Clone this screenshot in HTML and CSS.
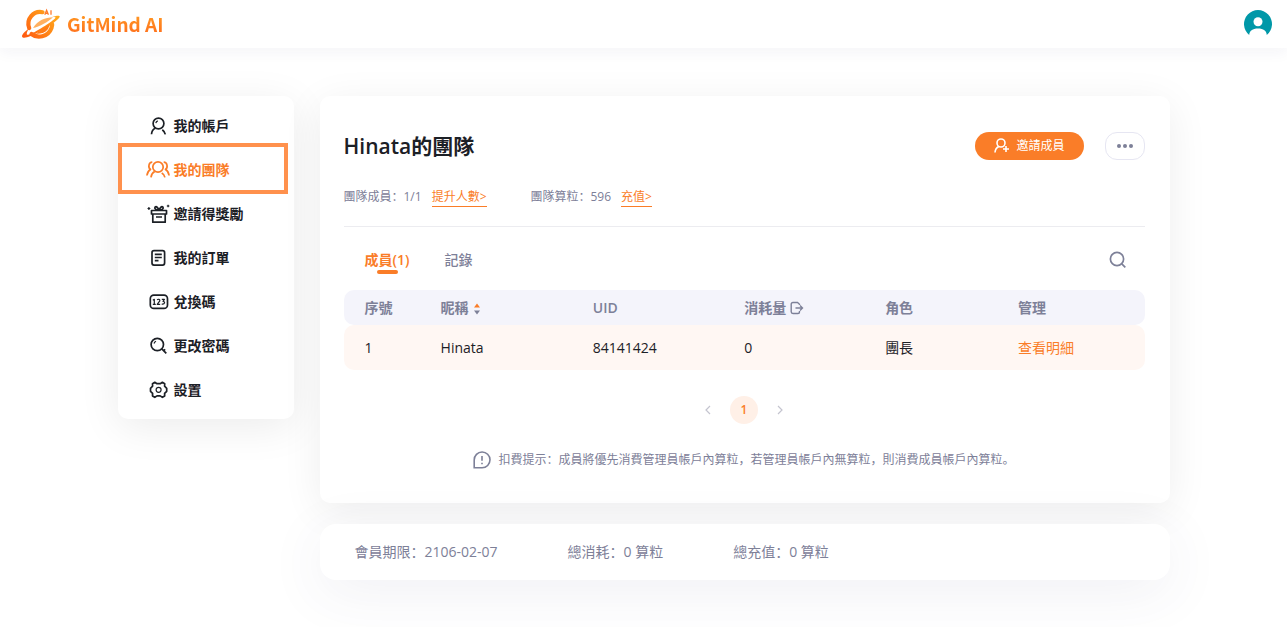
FILE: index.html
```html
<!DOCTYPE html>
<html lang="zh-CN">
<head>
<meta charset="utf-8">
<title>GitMind AI</title>
<link rel="stylesheet" href="styles.css">
</head>
<body>
<header class="topbar">
  <a class="brand" href="#">
    <svg class="brand-mark" viewBox="0 0 40 32" aria-hidden="true">
      <defs><linearGradient id="flame" gradientUnits="userSpaceOnUse" x1="4" y1="30" x2="34" y2="4"><stop offset="0" stop-color="#ff5a10"/><stop offset="1" stop-color="#ffac1c"/></linearGradient></defs>
      <path d="M21.500 4.200A11.800 11.800 0 0 0 8.200 20" fill="none" stroke="url(#flame)" stroke-width="4.200" stroke-linecap="round"/>
      <path d="M10.500 26C16 30.500 27 29.500 30.500 20L31.200 16.500" fill="none" stroke="url(#flame)" stroke-width="4.200" stroke-linecap="round"/>
      <path d="M8 20.500C2.500 24.300-.5 28.500 1.800 29.500 5 30.500 11 27.500 18 24 28 18.700 38 11.500 38.700 8.800 39.200 7 34.500 8 30 9.300 33 8.800 35 8.900 34.300 10 32.500 13 12.500 25.700 7 26.800 5 27.200 5.500 24 8 20.500Z" fill="url(#flame)"/>
      <path d="M12 20C17 12 24 9.500 32 9.200 28 13.300 18 18.800 12 20Z" fill="#ffb060"/>
      <path d="M15 25.500L28.500 16.500C28 23 21.500 26.500 15 25.500Z" fill="#ff7c17"/>
      <path d="M23.800 6.700L25.600 2.300 27.400 6.700M24.500 5.400H26.700M30 2.200V6.700" fill="none" stroke="#ff7a2c" stroke-width="1.300"/>
    </svg>
    <span class="brand-name">GitMind AI</span>
  </a>
  <button class="avatar" aria-label="帳戶">
    <svg viewBox="0 0 28 28" aria-hidden="true"><path d="M5.200 25A14 14 0 1 1 22.800 25C22.500 20.800 19.500 18.600 14 18.600S5.500 20.800 5.200 25Z" fill="#0098a8"/><circle cx="14" cy="11.800" r="4.500" fill="#fff"/></svg>
  </button>
</header>
<div class="layout">
  <nav class="sidebar">
    <a class="nav-item" href="#"><svg class="icon" viewBox="0 0 24 20"><circle cx="12.500" cy="7.500" r="5.400"/><path d="M9.300 12.300C7 13.300 5.700 15.300 5.500 18.300M16.300 13.700C18 15 19 16.500 19.300 18.300"/><path class="thin" d="M9.800 7.200A3 3 0 0 1 11.800 4.900"/></svg>我的帳戶</a>
    <a class="nav-item active" href="#" aria-current="page"><svg class="icon" viewBox="0 0 24 20"><circle cx="12" cy="7" r="5.200"/><path d="M8.700 11.500C6.400 12.600 5.300 14.600 5 17.300M15.700 13C17.600 14 18.600 15.500 18.900 17.300M6.300 2.200C2.700 2.400 1.700 7.300 4.500 9.500 2.500 10.600 1.300 12.500.9 15.500M17.700 2.200C21.300 2.400 22.300 7.300 19.500 9.500 21.500 10.600 22.700 12.500 23.100 15.500"/></svg>我的團隊</a>
    <a class="nav-item" href="#"><svg class="icon" viewBox="0 0 24 20"><path d="M5.500 6.500H20.500V10H5.500ZM6.800 10V18.200H19.200V10M10 13H16M13 6.500C10 6 8 4.500 9 3.200 10.500 1.800 12.300 4 13 6.500 13.700 4 15.500 1.800 17 3.200 18 4.500 16 6 13 6.500"/><path class="thin" d="M1.500 4.500H4.300M2.900 3.100V5.900M20.800 2H23.400M22.100.7V3.300"/></svg>邀請得獎勵</a>
    <a class="nav-item" href="#"><svg class="icon" viewBox="0 0 24 20"><rect x="6" y="2.700" width="12.600" height="14.400" rx="2"/><path d="M8.800 6.300H15.800M8.800 9.500H15.800M8.800 12.700H12.500"/></svg>我的訂單</a>
    <a class="nav-item" href="#"><svg class="icon" viewBox="0 0 24 20"><rect x="4.300" y="3.200" width="17.200" height="13.200" rx="3.500"/><path class="thin" d="M6.800 8.200L8.300 7.300V12.300M6.800 12.300H9.800M11.200 8C11.800 6.800 14.200 7.100 13.800 8.800L11.200 12.300H14.200M15.800 7.400H18.400L17 9.300C19.400 9.300 19.100 12.800 15.700 12.100"/></svg>兌換碼</a>
    <a class="nav-item" href="#"><svg class="icon" viewBox="0 0 24 20"><circle cx="11.300" cy="8.500" r="6.200"/><path d="M15.800 12.800L20.300 17.300M17.500 14.700L19.200 13.300"/><path class="thin" d="M8 7.500A3.500 3.500 0 0 1 10 5.300"/></svg>更改密碼</a>
    <a class="nav-item" href="#"><svg class="icon" viewBox="0 0 24 20"><path d="M8.800 2.300L11 3.700H14.200L16.400 2.300 18.700 3.700 18.600 6.200 20.700 8.300V11.300L18.600 13.400 18.700 15.900 16.400 17.300 14.200 15.900H11L8.800 17.300 6.500 15.900 6.600 13.400 4.500 11.300V8.300L6.600 6.200 6.500 3.700Z"/><circle class="thin" cx="12.600" cy="9.800" r="2.500"/></svg>設置</a>
  </nav>
  <main class="content">
    <section class="card team">
      <div class="title-row">
        <h1>Hinata的團隊</h1>
        <div class="actions">
          <button class="invite"><svg viewBox="0 0 18 16" aria-hidden="true"><circle cx="8" cy="5" r="4"/><path d="M5.800 8.500C3.500 9.600 2.200 11.700 2 14.500M13 8V14M10 11H16"/></svg>邀請成員</button>
          <button class="more" aria-label="更多"><i></i><i></i><i></i></button>
        </div>
      </div>
      <div class="stats">
        <p>團隊成員：1/1<a href="#">提升人數&gt;</a></p>
        <p>團隊算粒：596<a href="#">充值&gt;</a></p>
      </div>
      <div class="tabs">
        <button class="tab selected">成員(1)</button>
        <button class="tab">記錄</button>
        <button class="search" aria-label="搜尋"><svg viewBox="0 0 18 18"><circle cx="8" cy="8" r="6.600"/><path d="M12.800 12.800L16.300 16.300"/></svg></button>
      </div>
      <table class="members">
        <colgroup><col class="c-no"><col class="c-name"><col class="c-uid"><col class="c-used"><col class="c-role"><col></colgroup>
        <thead><tr>
          <th>序號</th>
          <th>昵稱<svg class="sort" viewBox="0 0 6 12" aria-hidden="true"><path d="M0 4.500L3 .5 6 4.500Z" fill="#fa7d28"/><path d="M0 7.500H6L3 11.500Z" fill="#7d8098"/></svg></th>
          <th>UID</th>
          <th>消耗量<svg class="export" viewBox="0 0 14 14" aria-hidden="true"><path d="M9.500 4V3.200L7.500 1.500H3Q1.200 1.500 1.200 3.200V10.800Q1.200 12.500 3 12.500H8Q9.500 12.500 9.500 11V10M5.500 7H12.500M10 4.500L12.500 7 10 9.500"/></svg></th>
          <th>角色</th>
          <th>管理</th>
        </tr></thead>
        <tbody><tr>
          <td>1</td><td>Hinata</td><td>84141424</td><td>0</td><td>團長</td><td><a href="#">查看明細</a></td>
        </tr></tbody>
      </table>
      <div class="pager">
        <button aria-label="上一頁"><svg viewBox="0 0 6 10"><path d="M5 1L1 5 5 9"/></svg></button>
        <button class="current">1</button>
        <button aria-label="下一頁"><svg viewBox="0 0 6 10"><path d="M1 1L5 5 1 9"/></svg></button>
      </div>
      <p class="notice"><svg viewBox="0 0 18 18" aria-hidden="true"><path d="M1.200 16.800V9A7.900 7.900 0 1 1 9.100 16.800ZM9 5V9.800M9 11.700V13.200"/></svg>扣費提示：成員將優先消費管理員帳戶內算粒，若管理員帳戶內無算粒，則消費成員帳戶內算粒。</p>
    </section>
    <section class="card summary">
      <p>會員期限：2106-02-07</p>
      <p>總消耗：0 算粒</p>
      <p>總充值：0 算粒</p>
    </section>
  </main>
</div>
</body>
</html>
```
FILE: styles.css
```css
* { box-sizing: border-box; }
body {
  margin: 0;
  background: #fff;
  color: #1c2026;
  font: 14px/20px "Open Sans", "Noto Sans CJK SC", sans-serif;
}
a { color: #fa7d28; text-decoration: none; }
button {
  padding: 0;
  border: 0;
  background: none;
  color: inherit;
  font: inherit;
  cursor: pointer;
}
h1, p { margin: 0; }
svg { display: block; flex: none; }

.topbar {
  display: flex;
  align-items: center;
  justify-content: space-between;
  height: 48px;
  padding: 0 15px 0 21px;
  background: #fff;
  box-shadow: 0 4px 14px rgba(40, 40, 90, 0.05);
}
.brand { display: flex; align-items: center; gap: 6px; }
.brand-mark { width: 40px; height: 32px; }
.brand-name {
  background: linear-gradient(180deg, #ffa024, #ff6a1c);
  background-clip: text;
  color: transparent;
  font: 700 19px/26px "Noto Sans CJK SC", sans-serif;
}
.avatar svg { width: 28px; height: 28px; }

.layout {
  display: flex;
  align-items: flex-start;
  gap: 26px;
  max-width: 1052px;
  margin: 48px auto;
}
.sidebar {
  width: 176px;
  flex: none;
  padding: 8px 0 7px;
  border-radius: 10px;
  background: #fff;
  box-shadow: 0 8px 42px rgba(0, 0, 0, 0.08);
}
.nav-item {
  position: relative;
  display: flex;
  align-items: center;
  gap: 4px;
  height: 44px;
  padding-left: 28px;
  color: #1c2026;
  font-weight: 600;
}
.icon {
  width: 24px;
  height: 20px;
  fill: none;
  stroke: currentColor;
  stroke-width: 1.7;
  stroke-linejoin: round;
}
.thin { stroke-width: 1.2; }
.nav-item.active { color: #fa7d28; }
.nav-item.active::after {
  content: "";
  position: absolute;
  inset: -5px 6px -2px 0;
  border: 4px solid #ff914d;
}

.content {
  flex: 1;
  min-width: 0;
  display: grid;
  gap: 21px;
}
.card { background: #fff; }
.team {
  padding: 36px 25px 33px 24px;
  border-radius: 10px;
  box-shadow: 0 8px 42px rgba(0, 0, 0, 0.07);
}
.title-row {
  display: flex;
  align-items: center;
  justify-content: space-between;
}
h1 { font-size: 21px; line-height: 28px; font-weight: 600; }
.actions { display: flex; gap: 21px; }
.invite {
  display: flex;
  align-items: center;
  justify-content: center;
  gap: 5px;
  width: 109px;
  height: 28px;
  border-radius: 14px;
  background: #fa7d28;
  color: #fff;
  font-size: 12px;
}
.invite svg {
  width: 18px;
  height: 16px;
  fill: none;
  stroke: currentColor;
  stroke-width: 1.6;
}
.more {
  display: flex;
  align-items: center;
  justify-content: center;
  gap: 2px;
  width: 40px;
  height: 28px;
  border: 1px solid #e6e6f2;
  border-radius: 12px;
}
.more i { width: 4px; height: 4px; border-radius: 50%; background: #7d8098; }

.stats {
  display: flex;
  gap: 44px;
  padding: 27px 0 19px;
  border-bottom: 1px solid #ececf0;
  color: #7d8098;
  font-size: 12px;
}
.stats a {
  display: inline-block;
  margin-left: 10px;
  border-bottom: 1px solid #fa7d28;
  line-height: 18px;
}

.tabs {
  display: flex;
  align-items: center;
  gap: 35px;
  padding: 19px 18px 16px 21px;
  color: #7d8098;
}
.tab { position: relative; height: 28px; }
.tab.selected { color: #fa7d28; font-weight: 600; }
.tab.selected::after {
  content: "";
  position: absolute;
  left: 12px;
  bottom: 0;
  width: 21px;
  height: 4px;
  border-radius: 2px;
  background: #fa7d28;
}
.tab:not(.selected) { font-weight: 500; }
.search { margin-left: auto; }
.search svg {
  width: 18px;
  height: 18px;
  fill: none;
  stroke: #7d8098;
  stroke-width: 1.7;
}

.members {
  width: 100%;
  table-layout: fixed;
  border-spacing: 0;
  text-align: left;
}
.c-no { width: 9.5%; }
.c-name { width: 19%; }
.c-uid { width: 18.9%; }
.c-used { width: 17.6%; }
.c-role { width: 16.6%; }
.members th {
  height: 35px;
  padding: 0 0 0 21px;
  background: #f4f4fb;
  color: #7d8098;
  font-weight: 600;
}
.members td {
  height: 45px;
  padding: 0 0 0 21px;
  background: #fff7f3;
}
.members th:first-child, .members td:first-child { border-radius: 10px 0 0 10px; }
.members th:last-child, .members td:last-child { border-radius: 0 10px 10px 0; }
.sort, .export { display: inline-block; vertical-align: -2px; }
.sort { width: 6px; height: 12px; margin-left: 5px; }
.export {
  width: 14px;
  height: 14px;
  margin-left: 4px;
  fill: none;
  stroke: #7d8098;
  stroke-width: 1.4;
}

.pager {
  display: flex;
  justify-content: center;
  gap: 18px;
  margin-top: 26px;
}
.pager button { display: grid; place-items: center; min-width: 8px; height: 28px; }
.pager svg {
  width: 6px;
  height: 10px;
  fill: none;
  stroke: #c4c4cf;
  stroke-width: 1.2;
}
.pager .current {
  width: 28px;
  border-radius: 50%;
  background: #fff0e7;
  color: #fa7d28;
  font-size: 12px;
  font-weight: 600;
}
.notice {
  display: flex;
  align-items: center;
  justify-content: center;
  gap: 7px;
  margin-top: 26px;
  color: #7d8098;
  font-size: 12px;
}
.notice svg {
  width: 18px;
  height: 18px;
  fill: none;
  stroke: currentColor;
  stroke-width: 1.6;
}
.summary {
  display: flex;
  align-items: center;
  gap: 70px;
  height: 56px;
  padding: 0 35px;
  border-radius: 16px;
  box-shadow: 0 12px 56px rgba(60, 60, 120, 0.08);
  color: #7d8098;
}
```
